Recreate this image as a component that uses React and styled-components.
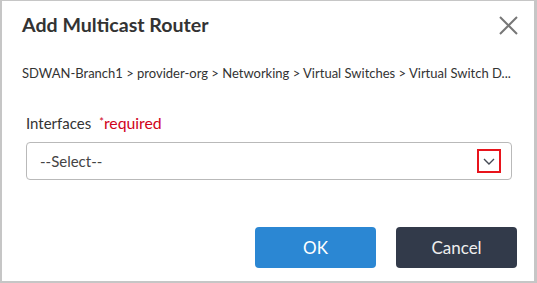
import styled, { createGlobalStyle } from "styled-components";

const GlobalStyle = createGlobalStyle`
  html, body {
    margin: 0;
    padding: 0;
    background: #ffffff;
  }
  body {
    font-family: Lato, "Open Sans", sans-serif;
  }
`;

const Dialog = styled.div`
  width: 537px;
  height: 283px;
  box-sizing: border-box;
  border-style: solid;
  border-color: #c6c6c6;
  border-width: 1px 3px 2px 2px;
  background: #ffffff;
  display: flex;
  flex-direction: column;
  color: #333333;
`;

const Header = styled.div`
  display: flex;
  align-items: center;
  justify-content: space-between;
  padding: 12px 16px 0 20px;
`;

const Title = styled.h2`
  margin: 0;
  font-size: 19.6px;
  line-height: 24px;
  font-weight: 700;
  color: #333333;
`;

const CloseButton = styled.button`
  background: none;
  border: none;
  padding: 0;
  width: 20px;
  height: 20px;
  cursor: pointer;
  display: flex;
  align-items: center;
  justify-content: center;
`;

const Breadcrumb = styled.div`
  margin: 28px 19px 0 20px;
  font-size: 13px;
  line-height: 16px;
  white-space: nowrap;
  color: #333333;
`;

const Form = styled.div`
  padding: 0 22px 0 24px;
  margin-top: 32px;
`;

const Label = styled.div`
  font-size: 15px;
  line-height: 18px;
  color: #333333;
  display: flex;
  align-items: baseline;
  gap: 8px;
`;

const Required = styled.span`
  color: #d0021b;
  font-size: 15.8px;
`;

const Star = styled.span`
  font-size: 11px;
  vertical-align: 3px;
`;

const Select = styled.div`
  margin-top: 10px;
  height: 38px;
  box-sizing: border-box;
  border: 1px solid #b9b9b9;
  border-radius: 4px;
  display: flex;
  align-items: center;
  justify-content: space-between;
  padding: 0 10px 0 13px;
  font-size: 15px;
  color: #444444;
`;

const Chevron = styled.span`
  width: 24px;
  height: 24px;
  box-sizing: border-box;
  border: 2px solid #e8141c;
  display: flex;
  align-items: center;
  justify-content: center;
`;

const Footer = styled.div`
  margin-top: auto;
  display: flex;
  justify-content: flex-end;
  gap: 20px;
  padding: 0 17px 13px 0;
`;

const Button = styled.button`
  width: 121px;
  height: 41px;
  border: none;
  border-radius: 4px;
  font-family: Lato, "Open Sans", sans-serif;
  font-size: 17px;
  cursor: pointer;
  color: ${(p) => (p.$primary ? "#ffffff" : "#eeeeee")};
  background: ${(p) => (p.$primary ? "#2b87d3" : "#323a4a")};
`;

export default function App() {
  return (
    <>
      <GlobalStyle />
      <Dialog>
        <Header>
          <Title>Add Multicast Router</Title>
          <CloseButton aria-label="Close">
            <svg width="19" height="19" viewBox="0 0 19 19">
              <path
                d="M1 1L18 18M18 1L1 18"
                stroke="#777777"
                strokeWidth="2"
                fill="none"
              />
            </svg>
          </CloseButton>
        </Header>
        <Breadcrumb>
          SDWAN-Branch1 &gt; provider-org &gt; Networking &gt; Virtual Switches
          &gt; Virtual Switch D...
        </Breadcrumb>
        <Form>
          <Label>
            Interfaces
            <Required>
              <Star>*</Star>required
            </Required>
          </Label>
          <Select>
            --Select--
            <Chevron>
              <svg width="12" height="7" viewBox="0 0 12 7">
                <path
                  d="M1 1L6 6L11 1"
                  stroke="#444a55"
                  strokeWidth="1.4"
                  fill="none"
                />
              </svg>
            </Chevron>
          </Select>
        </Form>
        <Footer>
          <Button $primary>OK</Button>
          <Button>Cancel</Button>
        </Footer>
      </Dialog>
    </>
  );
}
